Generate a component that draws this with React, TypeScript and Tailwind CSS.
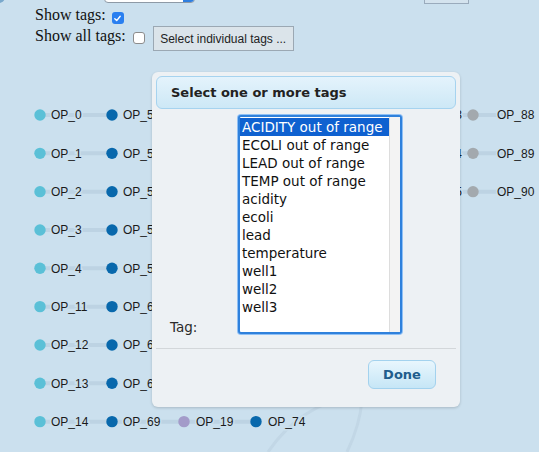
import React from 'react';

const ROW_Y = Array.from({ length: 9 }, (_, i) => 115 + i * 38.33);
const COL1 = ['OP_0', 'OP_1', 'OP_2', 'OP_3', 'OP_4', 'OP_11', 'OP_12', 'OP_13', 'OP_14'];
const COL2 = ['OP_50', 'OP_51', 'OP_52', 'OP_53', 'OP_54', 'OP_60', 'OP_61', 'OP_62', 'OP_69'];
const TAGS = [
  'ACIDITY out of range',
  'ECOLI out of range',
  'LEAD out of range',
  'TEMP out of range',
  'acidity',
  'ecoli',
  'lead',
  'temperature',
  'well1',
  'well2',
  'well3',
];

const BG = '#cbe0ee';
const LINK = '#bdd3e3';

const Label = ({ x, y, text, anchor = 'start' }: { x: number; y: number; text: string; anchor?: 'start' | 'end' }) => (
  <text
    x={x}
    y={y + 4.3}
    textAnchor={anchor}
    fontSize={12}
    fontFamily='"Liberation Sans", Arial, sans-serif'
    fill="#1a1a1a"
    stroke={BG}
    strokeWidth={3}
    style={{ paintOrder: 'stroke' }}
  >
    {text}
  </text>
);

const Graph = () => (
  <svg className="absolute inset-0" width={539} height={452}>
    {/* faint curved links */}
    <path d="M268 452 Q300 405 355 395" fill="none" stroke="#c2d7e6" strokeWidth={3} />
    <path d="M347 452 Q360 425 362 400" fill="none" stroke="#c2d7e6" strokeWidth={3} />

    {ROW_Y.map((y, i) => (
      <line key={'l' + i} x1={40} y1={y} x2={112} y2={y} stroke={LINK} strokeWidth={4} />
    ))}
    <line x1={112} y1={ROW_Y[8]} x2={256} y2={ROW_Y[8]} stroke={LINK} strokeWidth={4} />
    {[0, 1, 2].map((i) => (
      <line key={'r' + i} x1={400} y1={ROW_Y[i]} x2={505} y2={ROW_Y[i]} stroke={LINK} strokeWidth={4} />
    ))}

    {ROW_Y.map((y, i) => (
      <g key={'n' + i}>
        <circle cx={40} cy={y} r={5.7} fill="#5bc0d7" />
        <Label x={51} y={y} text={COL1[i]} />
        <circle cx={112} cy={y} r={5.7} fill="#0868ac" />
        <Label x={123} y={y} text={COL2[i]} />
      </g>
    ))}
    <circle cx={184} cy={ROW_Y[8]} r={5.7} fill="#a39bc9" />
    <Label x={196} y={ROW_Y[8]} text="OP_19" />
    <circle cx={256} cy={ROW_Y[8]} r={5.7} fill="#0868ac" />
    <Label x={268} y={ROW_Y[8]} text="OP_74" />

    {['OP_83', 'OP_84', 'OP_85'].map((t, i) => (
      <Label key={t} x={462} y={ROW_Y[i]} text={t} anchor="end" />
    ))}
    {['OP_88', 'OP_89', 'OP_90'].map((t, i) => (
      <g key={t}>
        <circle cx={473} cy={ROW_Y[i]} r={5.7} fill="#a3a9ae" />
        <Label x={497} y={ROW_Y[i]} text={t} />
      </g>
    ))}
  </svg>
);

const TagDialog = () => (
  <div
    className="absolute left-[152px] top-[72px] w-[308px] flex flex-col p-[4px] rounded-[6px] bg-[#edf1f4] shadow-[0_1px_3px_rgba(0,0,0,0.18)]"
    style={{ fontFamily: '"DejaVu Sans", Verdana, sans-serif' }}
  >
    <div className="h-[33px] flex items-center pl-[14px] rounded-[6px] border border-[#a6d3ef] bg-gradient-to-b from-[#e4f3fc] to-[#cde8f6]">
      <span className="text-[13px] font-bold text-[#222]">Select one or more tags</span>
    </div>

    <div className="flex items-end mt-[5px] pl-[14px]">
      <span className="w-[67px] text-[13.5px] leading-[16px] text-[#2a2a2a]">Tag:</span>
      <div className="w-[166px] h-[221px] rounded-[4px] bg-[#8fc0f5] p-[1px]">
        <div className="flex h-full rounded-[3px] border-2 border-[#2f81dc] bg-white">
          <div className="flex-1 flex flex-col pt-[1px]">
            {TAGS.map((t, i) => (
              <div
                key={t}
                className={`h-[18px] leading-[18px] pl-[2px] text-[13.5px] whitespace-nowrap ${
                  i === 0 ? 'bg-[#0f61d0] text-white' : 'text-[#111]'
                }`}
              >
                {t}
              </div>
            ))}
          </div>
          <div className="w-[11px] bg-[#f3f3f3] border-l border-[#dddddd]" />
        </div>
      </div>
    </div>

    <div className="mt-[13px] border-t border-[#d3d7da]" />

    <div className="flex justify-end mt-[11px] mb-[14px] pr-[20px]">
      <button className="w-[68px] h-[29px] rounded-[6px] border border-[#a3d2ee] bg-gradient-to-b from-[#e8f6fd] to-[#c6e6f6] text-[13px] font-bold text-[#215d8c]">
        Done
      </button>
    </div>
  </div>
);

const Checkbox = ({ checked, className }: { checked: boolean; className: string }) =>
  checked ? (
    <span className={`w-[12px] h-[12px] rounded-[3px] bg-[#2a7ff0] flex items-center justify-center shrink-0 ${className}`}>
      <svg width="9" height="9" viewBox="0 0 9 9">
        <path d="M1.8 4.8 L3.7 6.6 L7.2 2.3" fill="none" stroke="white" strokeWidth="1.4" strokeLinecap="round" strokeLinejoin="round" />
      </svg>
    </span>
  ) : (
    <span className={`w-[12px] h-[12px] rounded-[3px] bg-white border border-[#8c8c8c] shrink-0 ${className}`} />
  );

export default function App() {
  return (
    <div className="relative w-[539px] h-[452px] overflow-hidden bg-[#cbe0ee]">
      <Graph />

      <div className="relative">
        {/* cut-off controls above the view */}
        <div className="flex items-end h-[4px] overflow-hidden">
          <div className="w-[12px] h-[12px] -ml-[7px] mb-[1px] rounded-full bg-[#7aa9cc] shrink-0" />
          <div className="flex ml-[99px] mb-[1px] w-[91px] h-[22px] shrink-0 rounded-[4px] border border-[#8e9aa6] bg-white overflow-hidden">
            <div className="flex-1" />
            <div className="w-[11px] bg-[#2f7fe0]" />
          </div>
          <div className="ml-[229px] w-[45px] h-[22px] shrink-0 border border-[#9aabbc] bg-[#d4e3ee]" />
        </div>

        <div
          className="flex items-start pl-[35px] mt-[1px] h-[20px] text-[16px] text-[#111]"
          style={{ fontFamily: '"Liberation Serif", "Times New Roman", serif' }}
        >
          <span className="leading-[20px]">Show tags:</span>
          <Checkbox checked className="ml-[6px] mt-[7px]" />
        </div>

        <div
          className="flex items-start pl-[35px] h-[26px] text-[16px] text-[#111]"
          style={{ fontFamily: '"Liberation Serif", "Times New Roman", serif' }}
        >
          <span className="leading-[20px] mt-[1px]">Show all tags:</span>
          <Checkbox checked={false} className="ml-[7px] mt-[7px]" />
          <button
            className="ml-[8px] mt-[1px] w-[141px] h-[25px] border border-[#9ba8b3] bg-[#dbe4ea] text-[12px] text-[#222]"
            style={{ fontFamily: '"Liberation Sans", Arial, sans-serif' }}
          >
            Select individual tags ...
          </button>
        </div>
      </div>

      <TagDialog />
    </div>
  );
}
